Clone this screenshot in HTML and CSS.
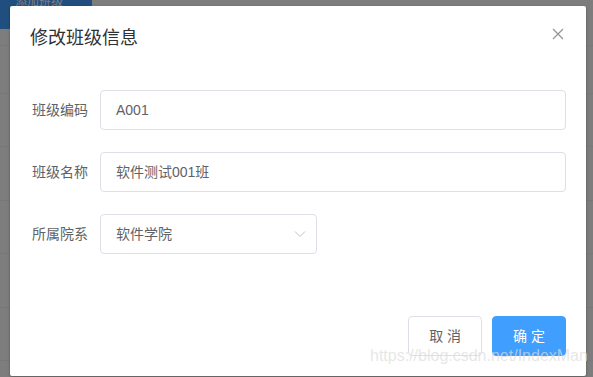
FILE: index.html
```html
<!DOCTYPE html>
<html lang="zh-CN">
<head>
<meta charset="utf-8">
<title>修改班级信息</title>
<link rel="stylesheet" href="styles.css">
</head>
<body>
<div class="page">
  <div class="toolbar">
    <div class="add-btn"><span class="add-text">添加班级</span></div>
  </div>
  <div class="table">
    <div class="thead"></div>
    <div class="row"></div>
    <div class="row"></div>
    <div class="row"></div>
    <div class="row"></div>
    <div class="row"></div>
  </div>
</div>
<div class="overlay"></div>
<div class="dialog">
  <div class="dialog-header">
    <span class="dialog-title">修改班级信息</span>
    <svg class="close" width="16" height="16" viewBox="0 0 16 16"><path d="M3 3 L13 13 M13 3 L3 13" stroke="#909399" stroke-width="1.2" fill="none"/></svg>
  </div>
  <div class="dialog-body">
    <div class="form-item">
      <label class="form-label">班级编码</label>
      <div class="input">A001</div>
    </div>
    <div class="form-item">
      <label class="form-label">班级名称</label>
      <div class="input">软件测试001班</div>
    </div>
    <div class="form-item">
      <label class="form-label">所属院系</label>
      <div class="input select"><span>软件学院</span><svg width="12" height="12" viewBox="0 0 12 12"><path d="M1 3.5 L6 8.5 L11 3.5" stroke="#C0C4CC" stroke-width="1" fill="none"/></svg></div>
    </div>
  </div>
  <div class="dialog-footer">
    <button class="btn">取 消</button>
    <button class="btn btn-primary">确 定</button>
  </div>
</div>
<div class="watermark">https://blog.csdn.net/IndexMan</div>
</body>
</html>
```
FILE: styles.css
```css
html, body {
  margin: 0;
  padding: 0;
}
body {
  width: 593px;
  height: 377px;
  overflow: hidden;
  position: relative;
  background: #fafafa;
  font-family: "Liberation Sans", "Noto Sans CJK SC", sans-serif;
}
.page {
  width: 593px;
}
.toolbar {
  height: 45px;
}
.add-btn {
  width: 92px;
  height: 29px;
  background: #409EFF;
  overflow: hidden;
}
.add-text {
  display: block;
  margin: -4px 0 0 15px;
  font-size: 12px;
  line-height: 12px;
  color: #ffffff;
}
.table {
  border-top: 1px solid #EBEEF5;
}
.thead {
  height: 47px;
  border-bottom: 1px solid #EBEEF5;
}
.row {
  height: 52.4px;
  border-bottom: 1px solid #EBEEF5;
}
.overlay {
  position: absolute;
  inset: 0;
  background: rgba(0, 0, 0, 0.5);
}
.dialog {
  position: absolute;
  left: 10px;
  top: 6px;
  width: 576px;
  background: #ffffff;
  border-radius: 2px;
  box-shadow: 0 1px 3px rgba(0, 0, 0, 0.3);
}
.dialog-header {
  padding: 20px 20px 10px;
  display: flex;
  justify-content: space-between;
  align-items: flex-start;
}
.dialog-title {
  font-size: 18px;
  line-height: 24px;
  color: #303133;
}
.close {
  display: block;
}
.dialog-body {
  padding: 30px 20px;
}
.form-item {
  display: flex;
  margin-bottom: 22px;
}
.form-label {
  width: 70px;
  box-sizing: border-box;
  padding-right: 12px;
  text-align: right;
  font-size: 14px;
  line-height: 40px;
  color: #606266;
}
.input {
  flex: 1;
  height: 40px;
  box-sizing: border-box;
  border: 1px solid #DCDFE6;
  border-radius: 4px;
  padding: 0 15px;
  font-size: 14px;
  line-height: 38px;
  color: #606266;
}
.select {
  flex: none;
  width: 217px;
  display: flex;
  justify-content: space-between;
  align-items: center;
  padding-right: 10px;
}
.select svg {
  display: block;
}
.dialog-footer {
  padding: 10px 20px 20px;
  display: flex;
  justify-content: flex-end;
  gap: 10px;
}
.btn {
  font-family: "Liberation Sans", "Noto Sans CJK SC", sans-serif;
  height: 40px;
  box-sizing: border-box;
  padding: 0 20px;
  border: 1px solid #DCDFE6;
  border-radius: 4px;
  background: #ffffff;
  color: #606266;
  font-size: 14px;
  line-height: 38px;
  white-space: pre;
}
.btn-primary {
  background: #409EFF;
  border-color: #409EFF;
  color: #ffffff;
}
.watermark {
  position: absolute;
  left: 370px;
  top: 346px;
  font-size: 16px;
  line-height: 20px;
  color: rgba(220, 220, 220, 0.7);
  white-space: nowrap;
}
```
